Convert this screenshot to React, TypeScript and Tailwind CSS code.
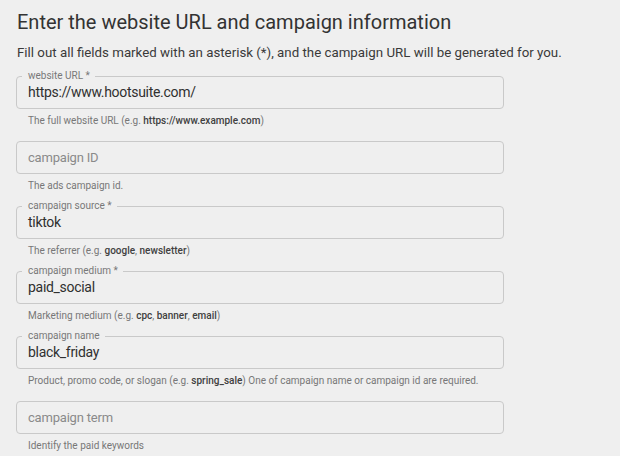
import React from 'react';

interface FieldProps {
  label?: string;
  value?: string;
  placeholder?: string;
  help: React.ReactNode;
}

function Field({ label, value, placeholder, help }: FieldProps) {
  return (
    <div className="flex flex-col">
      <div className="relative h-[33px] w-[488px] rounded-[4px] border border-[#c9c9c9] flex items-center px-[11px]">
        {label && (
          <span className="absolute -top-[7px] left-[5px] pl-[6px] pr-[5px] bg-[#efefef] text-[10px] leading-[12px] text-[#787878]">
            {label}
          </span>
        )}
        {value ? (
          <span className="text-[14px] tracking-[-0.3px] text-[#303030]">{value}</span>
        ) : (
          <span className="text-[13px] tracking-[-0.2px] text-[#8a8a8a]">{placeholder}</span>
        )}
      </div>
      <p className="mt-[5px] pl-[12px] h-[27px] text-[10px] leading-[14px] text-[#777777]">{help}</p>
    </div>
  );
}

const B = ({ children }: { children: React.ReactNode }) => (
  <span className="font-medium text-[#404040]">{children}</span>
);

export default function App() {
  return (
    <div className="w-[620px] h-[456px] overflow-hidden bg-[#efefef] pl-[16px] pt-[9px] font-['Roboto',sans-serif]">
      <h1 className="text-[20px] leading-[26px] text-[#333333] pl-[1px]">
        Enter the website URL and campaign information
      </h1>
      <p className="mt-[9px] text-[13.3px] leading-[18px] text-[#3a3a3a] pl-[1px]">
        Fill out all fields marked with an asterisk (*), and the campaign URL will be generated for you.
      </p>
      <div className="mt-[14px] flex flex-col">
        <Field
          label="website URL *"
          value="https://www.hootsuite.com/"
          help={<>The full website URL (e.g. <B>https://www.example.com</B>)</>}
        />
        <Field placeholder="campaign ID" help="The ads campaign id." />
        <Field
          label="campaign source *"
          value="tiktok"
          help={<>The referrer (e.g. <B>google</B>, <B>newsletter</B>)</>}
        />
        <Field
          label="campaign medium *"
          value="paid_social"
          help={<>Marketing medium (e.g. <B>cpc</B>, <B>banner</B>, <B>email</B>)</>}
        />
        <Field
          label="campaign name"
          value="black_friday"
          help={
            <>
              Product, promo code, or slogan (e.g. <B>spring_sale</B>) One of campaign name or campaign id are required.
            </>
          }
        />
        <Field placeholder="campaign term" help="Identify the paid keywords" />
      </div>
    </div>
  );
}
